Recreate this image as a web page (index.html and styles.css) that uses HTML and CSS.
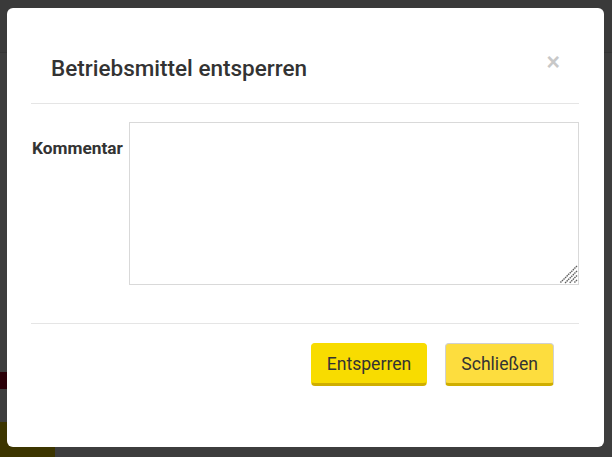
FILE: index.html
```html
<!DOCTYPE html>
<html lang="de">
<head>
    <meta charset="UTF-8">
    <meta name="viewport" content="width=device-width, initial-scale=1.0">
    <title>Betriebsmittel entsperren</title>
    <link rel="stylesheet" href="styles.css">
</head>
<body>
    <!-- Page behind the dialog -->
    <div id="page">
        <div class="page-topbar"></div>
        <div class="page-mark">T</div>
        <div class="page-button"></div>
    </div>

    <div id="backdrop"></div>

    <!-- Dialog -->
    <div id="modal">
        <div class="modal-header">
            <h4 class="modal-title">Betriebsmittel entsperren</h4>
            <button class="close" type="button">&times;</button>
        </div>

        <div class="modal-body">
            <label for="comment" class="control-label">Kommentar</label>
            <div class="textarea-wrap">
                <textarea id="comment" class="form-control"></textarea>
                <svg class="grip" width="19" height="19" viewBox="0 0 19 19">
                    <path d="M18 1 L1 18 M18 6 L6 18 M18 10.5 L10.5 18 M18 15 L15 18" stroke="#5e5e5e" stroke-width="1.4" stroke-dasharray="1.5 0.7" fill="none"/>
                </svg>
            </div>
        </div>

        <div class="modal-footer">
            <button class="btn btn-primary" type="button">Entsperren</button>
            <button class="btn btn-default" type="button">Schließen</button>
        </div>
    </div>
</body>
</html>
```

FILE: styles.css
```css
html, body {
    height: 100%;
}

body {
    margin: 0;
    background: #ffffff;
    font-family: Roboto, "Liberation Sans", sans-serif;
    color: #333333;
    overflow: hidden;
}

/* page content under the backdrop */
#page {
    height: 100%;
    display: flex;
    flex-direction: column;
}

.page-topbar {
    height: 52px;
    border-bottom: 1px solid #d8d8d8;
    background: #f2f2f2;
}

.page-mark {
    margin-top: 319px;
    width: 7px;
    height: 17px;
    overflow: hidden;
    background: #b00020;
    color: #b00020;
    font-size: 14px;
}

.page-button {
    margin-top: auto;
    width: 55px;
    height: 35px;
    background: #f8dc00;
}

#backdrop {
    position: fixed;
    inset: 0;
    background: rgba(0, 0, 0, 0.76);
}

/* dialog */
#modal {
    position: fixed;
    left: 7px;
    top: 8px;
    width: 597px;
    height: 439px;
    box-sizing: border-box;
    padding: 0 25px 0 24px;
    background: #ffffff;
    border-radius: 6px;
    display: flex;
    flex-direction: column;
}

.modal-header {
    display: flex;
    align-items: flex-start;
    padding: 48px 0 23px 20px;
    border-bottom: 1px solid #e5e5e5;
}

.modal-title {
    flex: 1;
    margin: 0;
    font-size: 22.5px;
    font-weight: 500;
    line-height: 24px;
    color: #333333;
}

.close {
    margin: -5px 19px 0 0;
    padding: 0;
    border: none;
    background: none;
    font-family: "Liberation Sans", Arial, sans-serif;
    font-size: 23px;
    font-weight: bold;
    line-height: 22px;
    color: #c8c8c8;
    cursor: pointer;
}

.modal-body {
    display: flex;
    align-items: flex-start;
    padding: 18px 0 38px 1px;
    border-bottom: 1px solid #e5e5e5;
}

.control-label {
    width: 97px;
    margin-top: 16px;
    font-size: 17.3px;
    font-weight: bold;
    line-height: 20px;
}

.textarea-wrap {
    flex: 1;
    position: relative;
    display: flex;
}

.form-control {
    flex: 1;
    height: 163px;
    box-sizing: border-box;
    margin: 0;
    border: 1px solid #d9d9d9;
    border-radius: 0;
    font-family: inherit;
    resize: none;
}

.grip {
    position: absolute;
    right: 1px;
    bottom: 1px;
}

.modal-footer {
    display: flex;
    justify-content: flex-end;
    gap: 18px;
    padding: 19px 25px 0 0;
}

.btn {
    height: 43px;
    box-sizing: border-box;
    padding: 0 15px;
    border: 1px solid transparent;
    border-bottom: 3px solid #cfae00;
    border-radius: 4px;
    font-family: inherit;
    font-size: 17.6px;
    color: #333333;
    cursor: pointer;
}

.btn-primary {
    background: #f8dc00;
    border-color: #f8dc00 #f8dc00 #cfae00;
}

.btn-default {
    background: #fddd3e;
    border-color: #d0d0d0 #d0d0d0 #cfae00;
}
```
